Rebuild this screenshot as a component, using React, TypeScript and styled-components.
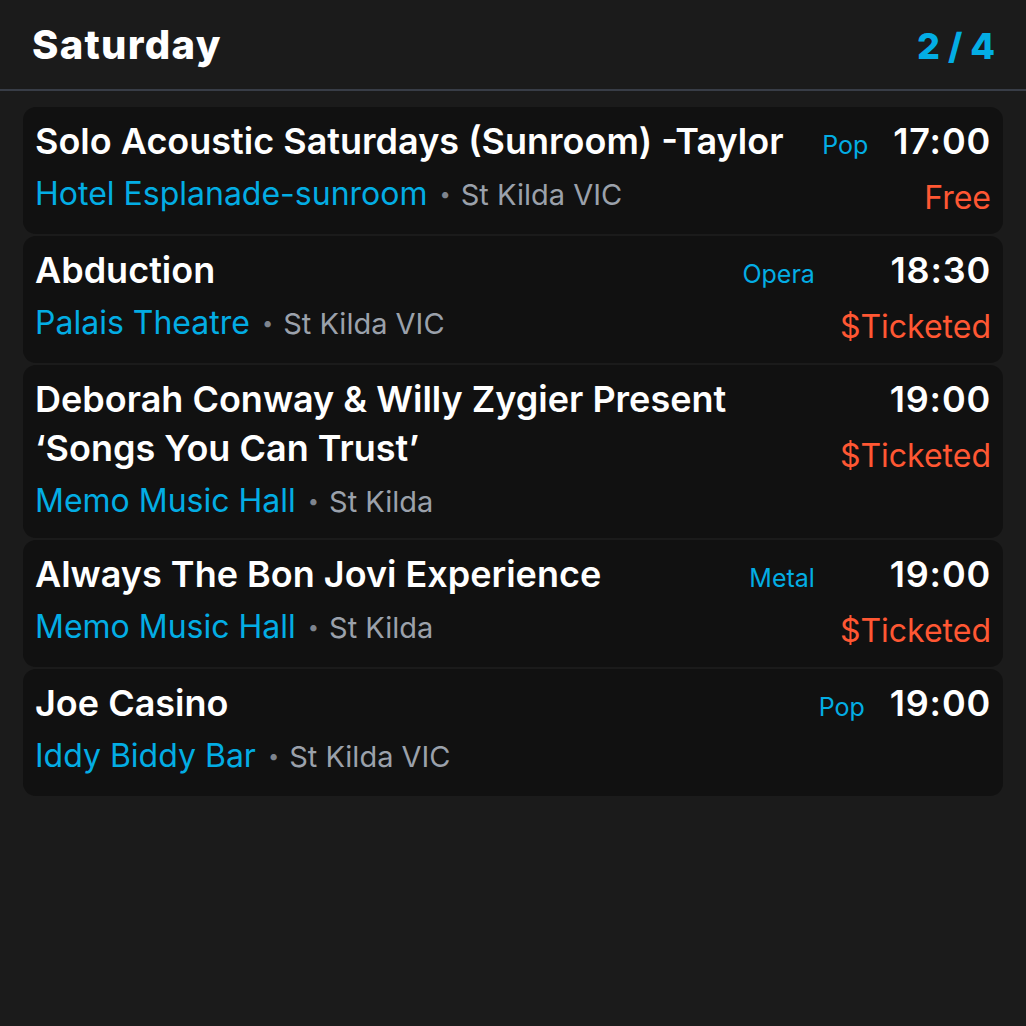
import React from "react";
import styled, { createGlobalStyle } from "styled-components";

const GlobalStyle = createGlobalStyle`
  html, body {
    margin: 0;
    padding: 0;
    background: #1b1b1b;
  }
  body {
    font-family: Inter, "Noto Sans", "Liberation Sans", sans-serif;
    -webkit-font-smoothing: antialiased;
  }
`;

const Page = styled.div`
  width: 1026px;
  min-height: 1026px;
  background: #1b1b1b;
  color: #ffffff;
  display: flex;
  flex-direction: column;
`;

const Header = styled.header`
  height: 89px;
  display: flex;
  align-items: center;
  justify-content: space-between;
  padding: 0 31px 0 32px;
  border-bottom: 2px solid #383d47;
`;

const DayTitle = styled.h1`
  margin: 0;
  font-size: 40px;
  font-weight: 800;
  letter-spacing: 1.3px;
  color: #ffffff;
`;

const PageCount = styled.div`
  font-size: 36px;
  font-weight: 800;
  color: #03ade4;
  letter-spacing: 0px;
  margin-top: 2px;
`;

const List = styled.div`
  display: flex;
  flex-direction: column;
  gap: 2px;
  padding: 16px 23px;
`;

const Card = styled.div`
  box-sizing: border-box;
  min-height: 127px;
  display: flex;
  align-items: baseline;
  background: #111111;
  border-radius: 13px;
  padding: 10px 12px 12px 12px;
`;

const Main = styled.div`
  flex: 1;
  min-width: 0;
  display: flex;
  flex-direction: column;
  padding-right: 20px;
`;

const Title = styled.div`
  font-size: 36px;
  line-height: 49px;
  font-weight: 600;
  letter-spacing: 0px;
  color: #ffffff;
`;

const Venue = styled.div`
  font-size: 32px;
  line-height: 49px;
  margin-top: 3px;
  font-weight: 400;
  letter-spacing: 0px;
  white-space: nowrap;
`;

const VenueName = styled.span`
  color: #03ade4;
`;

const Dot = styled.span`
  color: #7e848e;
  font-size: 20px;
  line-height: 1;
  margin: 0 10px 0 12px;
  position: relative;
  top: -4px;
`;

const Suburb = styled.span`
  color: #9ba1ab;
  font-size: 29px;
`;

const Genre = styled.div`
  font-size: 25px;
  font-weight: 400;
  color: #03ade4;
  margin-right: 25px;
  white-space: nowrap;
`;

const Side = styled.div`
  display: flex;
  flex-direction: column;
  align-items: flex-end;
`;

const Time = styled.div`
  font-size: 36px;
  line-height: 49px;
  font-weight: 600;
  letter-spacing: 0.8px;
  color: #ffffff;
`;

const Price = styled.div`
  font-size: 32px;
  line-height: 49px;
  margin-top: 7px;
  font-weight: 400;
  letter-spacing: 0px;
  color: #ff5733;
`;

type EventItem = {
  title: string;
  venue: string;
  suburb: string;
  genre?: string;
  time: string;
  price?: string;
};

const events: EventItem[] = [
  {
    title: "Solo Acoustic Saturdays (Sunroom) -Taylor",
    venue: "Hotel Esplanade-sunroom",
    suburb: "St Kilda VIC",
    genre: "Pop",
    time: "17:00",
    price: "Free",
  },
  {
    title: "Abduction",
    venue: "Palais Theatre",
    suburb: "St Kilda VIC",
    genre: "Opera",
    time: "18:30",
    price: "$Ticketed",
  },
  {
    title: "Deborah Conway & Willy Zygier Present \u2018Songs You Can Trust\u2019",
    venue: "Memo Music Hall",
    suburb: "St Kilda",
    time: "19:00",
    price: "$Ticketed",
  },
  {
    title: "Always The Bon Jovi Experience",
    venue: "Memo Music Hall",
    suburb: "St Kilda",
    genre: "Metal",
    time: "19:00",
    price: "$Ticketed",
  },
  {
    title: "Joe Casino",
    venue: "Iddy Biddy Bar",
    suburb: "St Kilda VIC",
    genre: "Pop",
    time: "19:00",
  },
];

export default function App() {
  return (
    <Page>
      <GlobalStyle />
      <Header>
        <DayTitle>Saturday</DayTitle>
        <PageCount>2 / 4</PageCount>
      </Header>
      <List>
        {events.map((e, i) => (
          <Card key={i}>
            <Main>
              <Title>{e.title}</Title>
              <Venue>
                <VenueName>{e.venue}</VenueName>
                <Dot>•</Dot>
                <Suburb>{e.suburb}</Suburb>
              </Venue>
            </Main>
            {e.genre && <Genre>{e.genre}</Genre>}
            <Side>
              <Time>{e.time}</Time>
              {e.price && <Price>{e.price}</Price>}
            </Side>
          </Card>
        ))}
      </List>
    </Page>
  );
}
